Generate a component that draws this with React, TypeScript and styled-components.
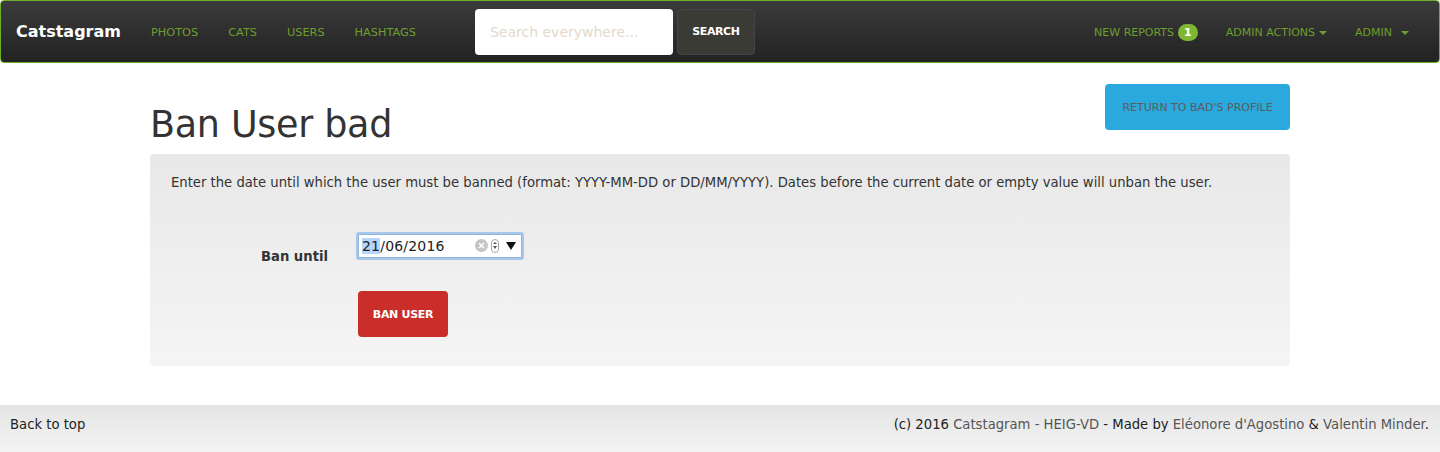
import React from "react";
import styled, { createGlobalStyle } from "styled-components";

const Global = createGlobalStyle`
  html, body { margin: 0; padding: 0; background: #fff; }
  body { font-family: "DejaVu Sans", Verdana, sans-serif; font-size: 13px; color: #333; }
  * { box-sizing: border-box; }
`;

const Page = styled.div`
  width: 1440px;
  min-height: 452px;
  display: flex;
  flex-direction: column;
`;

const Navbar = styled.nav`
  height: 63px;
  border: 1px solid #6fae2a;
  border-radius: 4px;
  background: linear-gradient(to bottom, #3b3b3b 0%, #222 100%);
  display: flex;
  align-items: center;
  padding: 0 0 0 15px;
`;

const Brand = styled.a`
  color: #fff;
  font-size: 16px;
  font-weight: bold;
  text-decoration: none;
  margin-right: 15px;
`;

const NavList = styled.div`
  display: flex;
  align-items: center;
`;

const NavLink = styled.a<{ $gap?: number }>`
  color: #6e9e2d;
  font-size: 11.3px;
  text-decoration: none;
  padding: 2px 15px 0;
  display: flex;
  align-items: center;
  gap: ${(p) => p.$gap ?? 4}px;
`;

const RightLink = styled(NavLink)`
  font-size: 11px;
  padding: 2px 14px 0;
`;

const SearchForm = styled.form`
  display: flex;
  gap: 4px;
  margin-left: 44px;
`;

const SearchInput = styled.div`
  width: 198px;
  height: 46px;
  background: #fff;
  border-radius: 4px;
  color: #e3d9cc;
  font-size: 14px;
  display: flex;
  align-items: center;
  padding-left: 15px;
`;

const SearchButton = styled.button`
  width: 78px;
  height: 46px;
  background: #3b3b36;
  border: 1px solid #444;
  border-radius: 4px;
  color: #fff;
  font-family: "DejaVu Sans", Verdana, sans-serif;
  font-size: 11px;
  font-weight: bold;
  letter-spacing: -0.4px;
`;

const RightNav = styled.div`
  margin-left: auto;
  display: flex;
  align-items: center;
  margin-right: 16px;
`;

const Badge = styled.span`
  background: #7fb734;
  color: #fff;
  border-radius: 9px;
  font-size: 11px;
  font-weight: bold;
  padding: 2px 6px;
  line-height: 13px;
`;

const Caret = styled.span`
  width: 0;
  height: 0;
  border-left: 4px solid transparent;
  border-right: 4px solid transparent;
  border-top: 4px solid #6e9e2d;
`;

const Container = styled.main`
  width: 1140px;
  margin: 0 auto;
  flex: 1;
`;

const Header = styled.div`
  display: flex;
  justify-content: space-between;
  align-items: flex-start;
  margin-top: 21px;
`;

const Title = styled.h1`
  margin: 20px 0 0 0;
  font-size: 36.5px;
  font-weight: normal;
  color: #333;
  line-height: 42px;
  letter-spacing: -0.3px;
`;

const ReturnButton = styled.a`
  width: 185px;
  height: 46px;
  background: #29a9dd;
  border-radius: 4px;
  color: #5c5c5c;
  font-size: 11px;
  display: flex;
  align-items: center;
  justify-content: center;
  text-decoration: none;
`;

const Panel = styled.section`
  margin-top: 8px;
  height: 212px;
  border-radius: 4px;
  background: linear-gradient(to bottom, #e8e8e8 0%, #f5f5f5 100%);
  padding: 21px 21px;
`;

const Intro = styled.p`
  margin: 0;
  font-size: 13.2px;
  color: #333;
  line-height: 16px;
`;

const FormRow = styled.div`
  display: grid;
  grid-template-columns: 157px 1fr;
  column-gap: 30px;
  margin-top: 39px;
  align-items: center;
`;

const Label = styled.label`
  text-align: right;
  font-weight: bold;
  font-size: 13.2px;
  color: #333;
  padding-top: 19px;
`;

const DateInput = styled.div`
  width: 164px;
  height: 24px;
  border: 1px solid #8fb4d9;
  box-shadow: 0 0 0 2px #a9c7e8;
  border-radius: 1px;
  background: #fff;
  display: flex;
  align-items: center;
  padding: 0 5px 0 3px;
  font-size: 14px;
  color: #222;
  margin-top: -3px;
`;

const Sel = styled.span`
  background: #b5d5fc;
`;

const DateText = styled.span`
  flex: 1;
  letter-spacing: 0.2px;
`;

const ClearIcon = styled.span`
  width: 13px;
  height: 13px;
  border-radius: 50%;
  background: #c4c4c4;
  display: flex;
  align-items: center;
  justify-content: center;
  margin-right: 3px;
`;

const Spinner = styled.span`
  width: 8px;
  height: 14px;
  border: 1px solid #aaa;
  border-radius: 4px;
  display: flex;
  flex-direction: column;
  align-items: center;
  justify-content: space-around;
  margin-right: 7px;
  padding: 2px 0;
`;

const Tri = styled.span<{ $up?: boolean; $size?: number; $color?: string }>`
  width: 0;
  height: 0;
  border-left: ${(p) => p.$size ?? 2}px solid transparent;
  border-right: ${(p) => p.$size ?? 2}px solid transparent;
  ${(p) =>
    p.$up
      ? `border-bottom: ${p.$size ?? 2}px solid ${p.$color ?? "#555"};`
      : `border-top: ${(p.$size ?? 2) * 1.6}px solid ${p.$color ?? "#555"};`}
`;

const ActionRow = styled.div`
  display: grid;
  grid-template-columns: 157px 1fr;
  column-gap: 30px;
  margin-top: 27px;
`;

const BanButton = styled.button`
  grid-column: 2;
  width: 90px;
  height: 46px;
  background: #c92e2b;
  border: none;
  border-radius: 4px;
  color: #fff;
  font-family: "DejaVu Sans", Verdana, sans-serif;
  font-size: 11px;
  font-weight: bold;
  letter-spacing: -0.3px;
`;

const Footer = styled.footer`
  margin-top: 39px;
  height: 47px;
  background: linear-gradient(to bottom, #e5e5e5 0%, #f3f3f3 100%);
  display: flex;
  align-items: center;
  justify-content: space-between;
  padding: 0 11px 8px 10px;
  font-size: 13.2px;
  color: #222;
`;

const FooterLink = styled.a`
  color: #555;
  text-decoration: none;
`;

export default function App() {
  return (
    <Page>
      <Global />
      <Navbar>
        <Brand href="#">Catstagram</Brand>
        <NavList>
          <NavLink href="#">PHOTOS</NavLink>
          <NavLink href="#">CATS</NavLink>
          <NavLink href="#">USERS</NavLink>
          <NavLink href="#">HASHTAGS</NavLink>
        </NavList>
        <SearchForm>
          <SearchInput>Search everywhere...</SearchInput>
          <SearchButton type="button">SEARCH</SearchButton>
        </SearchForm>
        <RightNav>
          <RightLink href="#">
            NEW REPORTS <Badge>1</Badge>
          </RightLink>
          <RightLink href="#">
            ADMIN ACTIONS<Caret />
          </RightLink>
          <RightLink href="#" $gap={9}>
            ADMIN <Caret />
          </RightLink>
        </RightNav>
      </Navbar>
      <Container>
        <Header>
          <Title>Ban User bad</Title>
          <ReturnButton href="#">RETURN TO BAD'S PROFILE</ReturnButton>
        </Header>
        <Panel>
          <Intro>
            Enter the date until which the user must be banned (format: YYYY-MM-DD or DD/MM/YYYY). Dates before the
            current date or empty value will unban the user.
          </Intro>
          <FormRow>
            <Label>Ban until</Label>
            <DateInput>
              <DateText>
                <Sel>21</Sel>/06/2016
              </DateText>
              <ClearIcon>
                <svg width="7" height="7" viewBox="0 0 7 7">
                  <path d="M1 1 L6 6 M6 1 L1 6" stroke="#fff" strokeWidth="1.6" />
                </svg>
              </ClearIcon>
              <Spinner>
                <Tri $up $size={2} />
                <Tri $size={2} />
              </Spinner>
              <Tri $size={5} $color="#111" />
            </DateInput>
          </FormRow>
          <ActionRow>
            <BanButton type="button">BAN USER</BanButton>
          </ActionRow>
        </Panel>
      </Container>
      <Footer>
        <span>Back to top</span>
        <span>
          (c) 2016 <FooterLink href="#">Catstagram - HEIG-VD</FooterLink> - Made by{" "}
          <FooterLink href="#">Eléonore d'Agostino</FooterLink> &amp; <FooterLink href="#">Valentin Minder</FooterLink>.
        </span>
      </Footer>
    </Page>
  );
}
